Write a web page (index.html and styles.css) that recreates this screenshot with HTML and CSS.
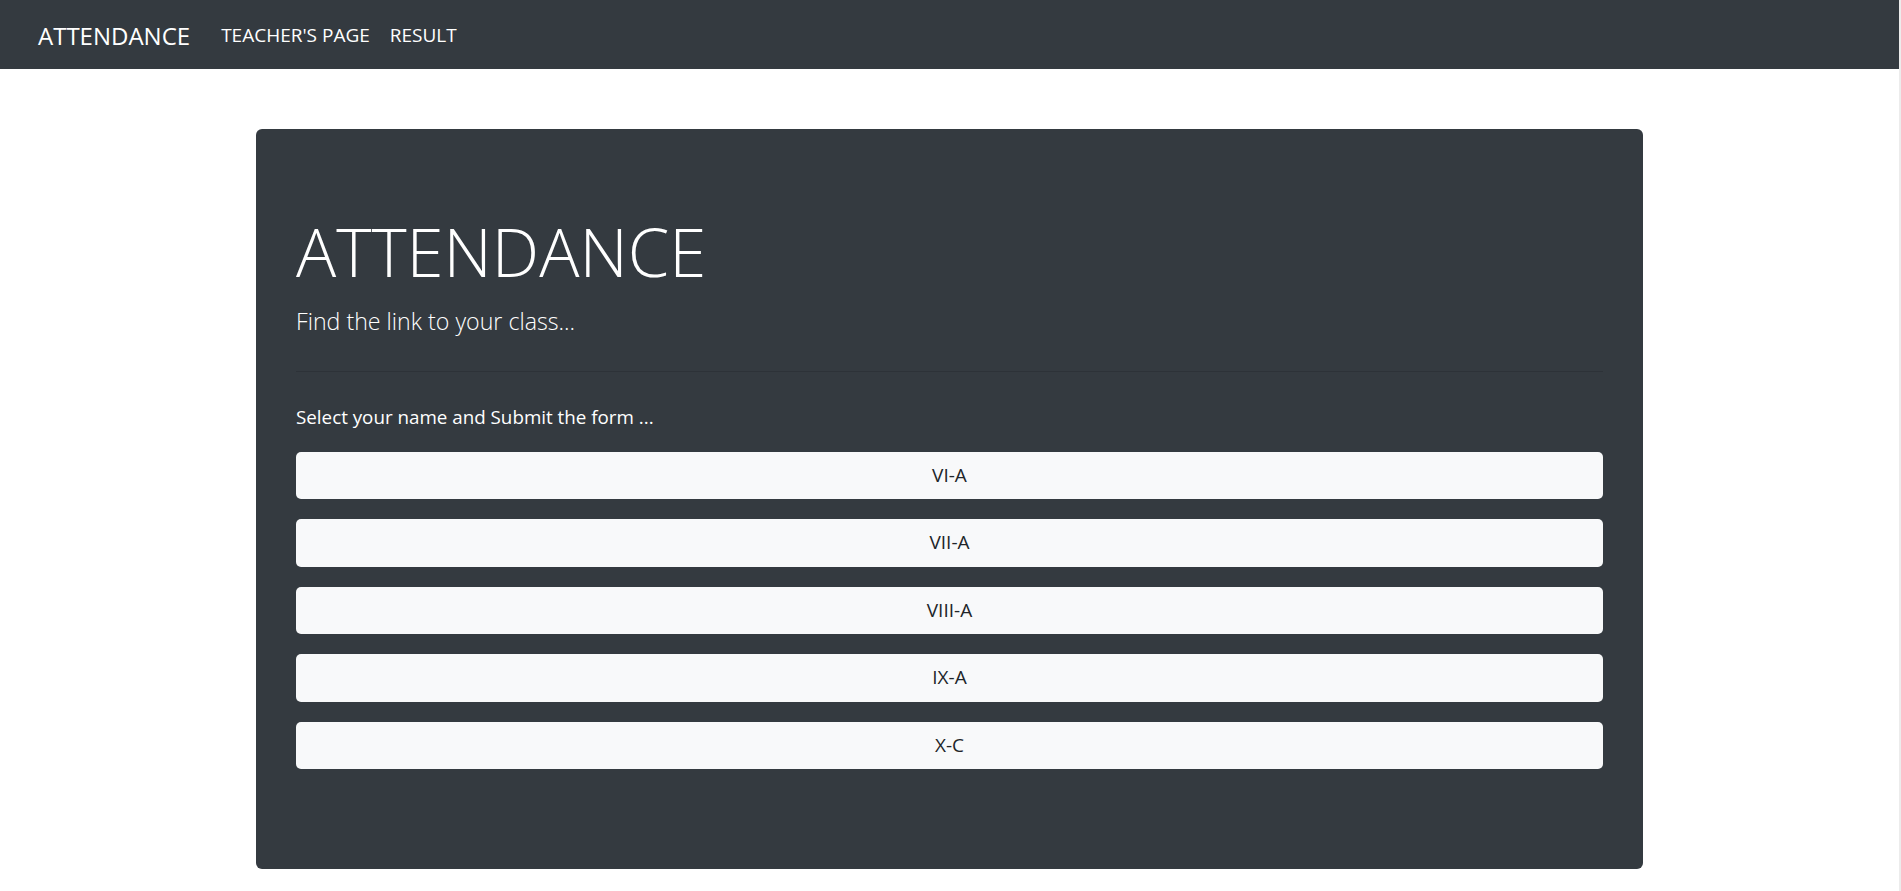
FILE: index.html
```html
<!DOCTYPE html>
<html lang="en">
<head>
<meta charset="utf-8">
<title>Attendance</title>
<link rel="stylesheet" href="styles.css">
</head>
<body>
<nav class="navbar">
  <a class="brand" href="#">ATTENDANCE</a>
  <ul class="nav-links">
    <li><a class="nav-link" href="#">TEACHER'S PAGE</a></li>
    <li><a class="nav-link" href="#">RESULT</a></li>
  </ul>
</nav>
<main class="container">
  <section class="jumbotron">
    <h1 class="display">ATTENDANCE</h1>
    <p class="lead">Find the link to your class...</p>
    <hr class="divider">
    <p class="instructions">Select your name and Submit the form ...</p>
    <div class="class-list">
      <a class="btn-light" href="#">VI-A</a>
      <a class="btn-light" href="#">VII-A</a>
      <a class="btn-light" href="#">VIII-A</a>
      <a class="btn-light" href="#">IX-A</a>
      <a class="btn-light" href="#">X-C</a>
    </div>
  </section>
</main>
</body>
</html>
```
FILE: styles.css
```css
* { box-sizing: border-box; }
html, body { margin: 0; padding: 0; }
body {
  font-family: "Open Sans", "Noto Sans", sans-serif;
  font-size: 19px;
  line-height: 1.5;
  color: #212529;
  background: #ffffff;
  border-right: 2px solid #ececec;
  min-height: 100vh;
}
a { text-decoration: none; }

.navbar {
  display: flex;
  align-items: center;
  height: 69px;
  padding: 2px 20px 0 38px;
  background: #343a40;
}
.brand {
  color: #ffffff;
  font-size: 24px;
  line-height: 37px;
  margin-right: 21px;
}
.nav-links {
  display: flex;
  list-style: none;
  margin: 0;
  padding: 0;
}
.nav-link {
  display: block;
  padding: 8px 10px;
  color: #ffffff;
  font-size: 19px;
}

.container {
  width: 1387px;
  margin: 60px auto 0;
}
.jumbotron {
  background: #343a40;
  border-radius: 6px;
  padding: 80px 40px 100px;
  color: #ffffff;
}
.display {
  margin: 0 0 10px;
  font-size: 67px;
  font-weight: 300;
  line-height: 84px;
}
.lead {
  margin: 0;
  font-size: 23.2px;
  font-weight: 300;
  line-height: 37.5px;
}
.divider {
  margin: 30px 0;
  border: 0;
  border-top: 1px solid rgba(0, 0, 0, 0.12);
}
.instructions {
  margin: 0 0 20px;
  font-size: 18.8px;
  line-height: 30px;
}
.class-list {
  display: flex;
  flex-direction: column;
  gap: 20px;
}
.btn-light {
  display: block;
  height: 47.5px;
  line-height: 47.5px;
  text-align: center;
  background: #f8f9fa;
  color: #212529;
  border-radius: 5px;
  font-size: 19px;
}
```
